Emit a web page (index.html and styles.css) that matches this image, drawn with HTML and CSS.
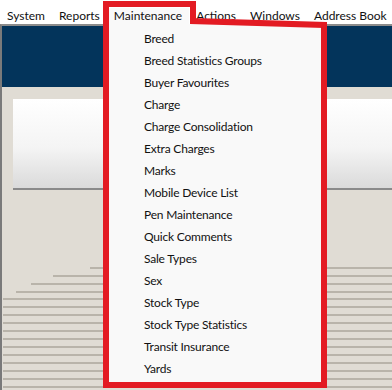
FILE: index.html
```html
<!DOCTYPE html>
<html lang="en">
<head>
    <meta charset="UTF-8">
    <title>Maintenance menu</title>
    <link rel="stylesheet" href="styles.css">
</head>
<body>
    <div class="menubar">
        <span class="menu-item">System</span>
        <span class="menu-item">Reports</span>
        <span class="menu-item active">Maintenance</span>
        <span class="menu-item">Actions</span>
        <span class="menu-item">Windows</span>
        <span class="menu-item">Address Book</span>
    </div>

    <div class="app">
        <div class="app-header"></div>
        <div class="app-body">
            <div class="panel"></div>
            <svg class="stripes" width="390" height="125" viewBox="0 0 390 125">
                <g fill="#b9b4aa">
                    <rect x="270" y="2" width="120" height="1"/>
                    <rect x="88" y="2" width="302" height="2"/>
                    <rect x="51" y="10" width="339" height="2"/>
                    <rect x="29" y="18" width="361" height="2"/>
                    <rect x="14" y="26" width="376" height="2"/>
                    <rect x="1" y="33" width="389" height="2"/>
                    <rect x="1" y="41" width="389" height="2"/>
                    <rect x="1" y="49" width="389" height="2"/>
                    <rect x="1" y="57" width="389" height="2"/>
                    <rect x="1" y="65" width="389" height="2"/>
                    <rect x="1" y="73" width="389" height="2"/>
                    <rect x="1" y="81" width="389" height="2"/>
                    <rect x="1" y="89" width="389" height="2"/>
                    <rect x="1" y="97" width="389" height="2"/>
                    <rect x="1" y="105" width="389" height="2"/>
                    <rect x="1" y="113" width="389" height="2"/>
                    <rect x="1" y="121" width="389" height="2"/>
                </g>
            </svg>
        </div>
    </div>

    <ul class="dropdown">
        <li>Breed</li>
        <li>Breed Statistics Groups</li>
        <li>Buyer Favourites</li>
        <li>Charge</li>
        <li>Charge Consolidation</li>
        <li>Extra Charges</li>
        <li>Marks</li>
        <li>Mobile Device List</li>
        <li>Pen Maintenance</li>
        <li>Quick Comments</li>
        <li>Sale Types</li>
        <li>Sex</li>
        <li>Stock Type</li>
        <li>Stock Type Statistics</li>
        <li>Transit Insurance</li>
        <li>Yards</li>
    </ul>

    <svg class="highlight" width="392" height="390" viewBox="0 0 392 390">
        <path d="M106 4 H193 V21 L324 25 V385 H106 Z" fill="none" stroke="#e31b23" stroke-width="6"/>
    </svg>
</body>
</html>
```

FILE: styles.css
```css
body {
    margin: 0;
    width: 392px;
    height: 390px;
    overflow: hidden;
    position: relative;
    font-family: Lato, "Noto Sans", sans-serif;
    font-size: 12px;
    letter-spacing: -0.2px;
    color: #111;
    background-color: #e0dcd4;
}

.menubar {
    display: flex;
    height: 16px;
    padding-top: 8px;
    line-height: 16px;
    letter-spacing: 0;
    background-color: #fff;
    white-space: nowrap;
}

.menu-item {
    padding: 0 7px;
}

.menu-item.active {
    background-color: #f9f9f9;
}

.app {
    height: 364px;
    border-top: 2px solid #8c8c8c;
    border-left: 2px solid #7a7a7a;
    display: flex;
    flex-direction: column;
}

.app-header {
    height: 61px;
    background-color: #03345b;
}

.app-body {
    flex: 1;
    padding-top: 12px;
    background-color: #e0dcd4;
    display: flex;
    flex-direction: column;
    justify-content: space-between;
}

.panel {
    height: 89px;
    margin-left: 11px;
    border-bottom: 2px solid #8a8a8a;
    background: linear-gradient(#ffffff, #f4f4f4 55%, #dadada);
}

.stripes {
    display: block;
}

.dropdown {
    position: absolute;
    left: 109px;
    top: 24px;
    width: 177px;
    height: 354px;
    margin: 0;
    padding: 4px 0 0 35px;
    list-style: none;
    background-color: #f9f9f9;
}

.dropdown li {
    height: 22px;
    line-height: 22px;
    white-space: nowrap;
}

.highlight {
    position: absolute;
    left: 0;
    top: 0;
    pointer-events: none;
}
```
